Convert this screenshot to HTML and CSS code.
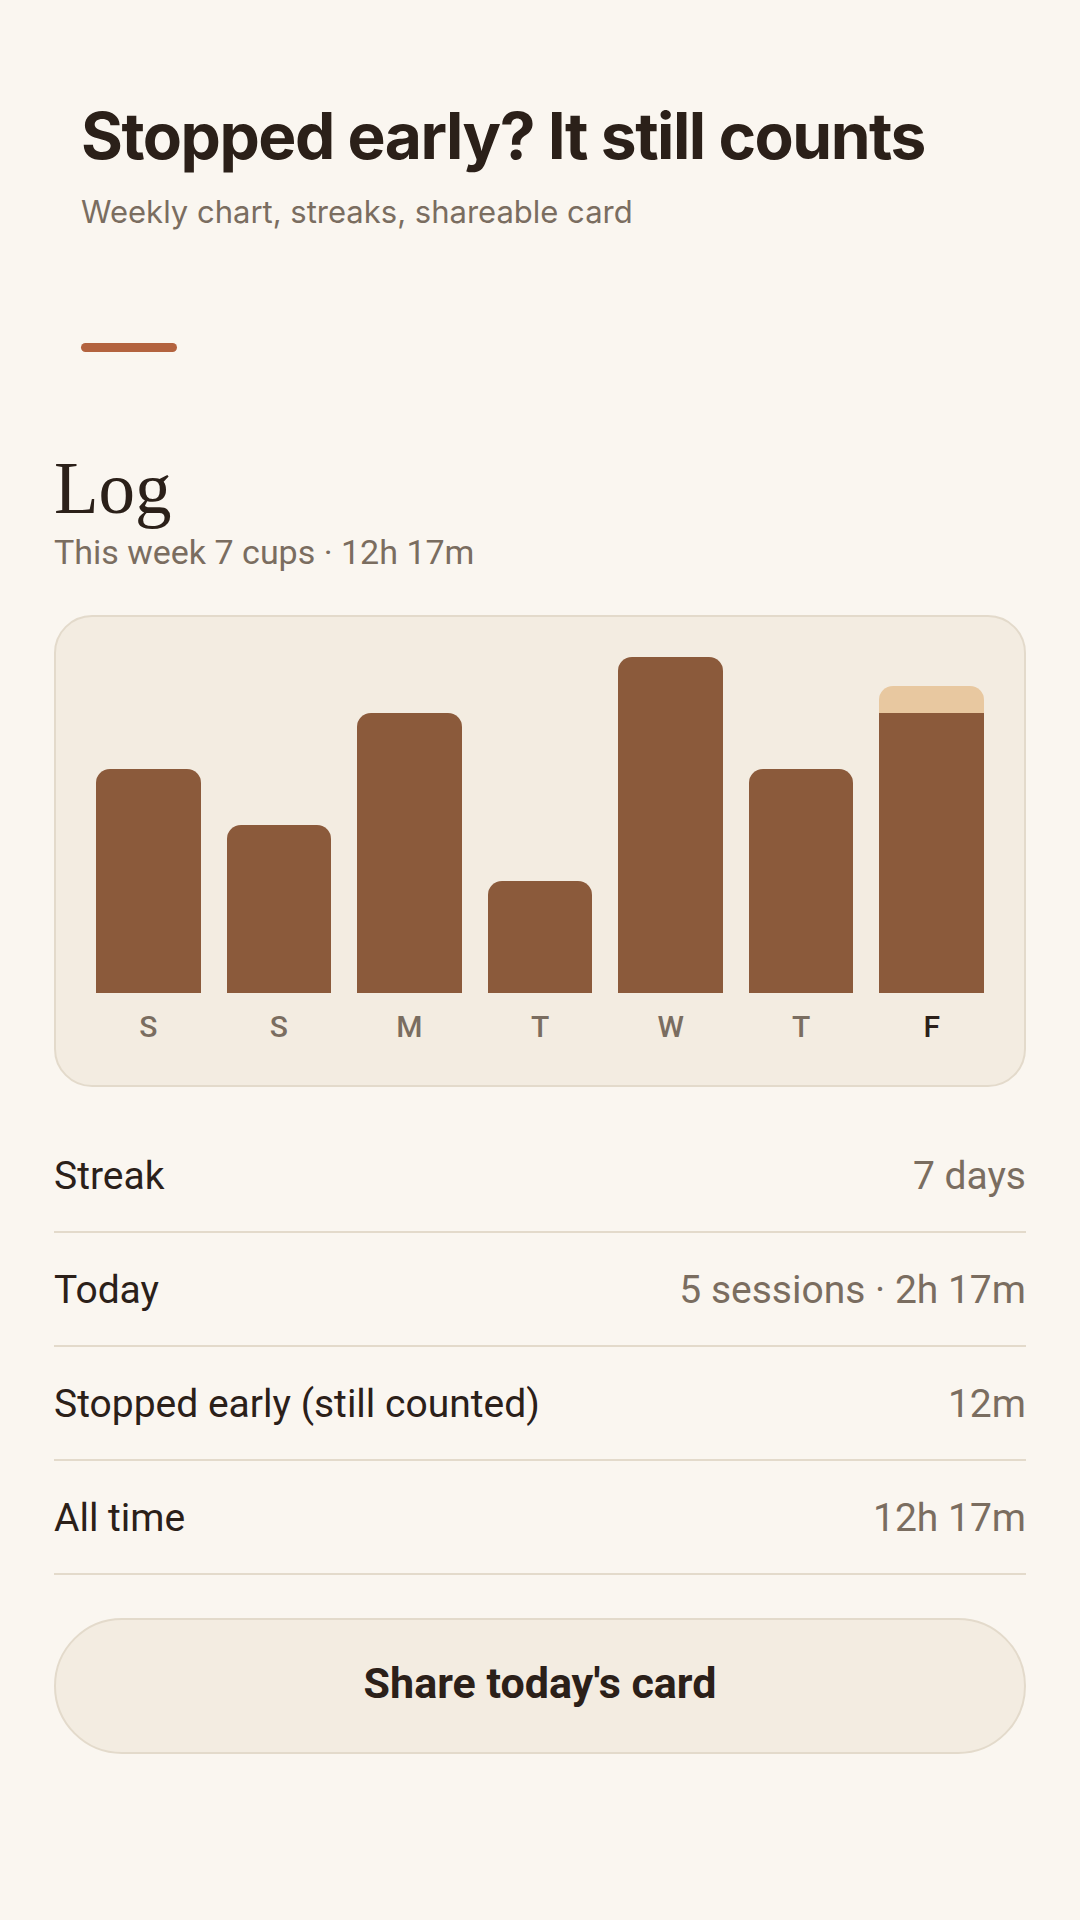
FILE: index.html
```html
<!DOCTYPE html>
<html lang="en">
<head>
<meta charset="utf-8">
<title>Log</title>
<link rel="stylesheet" href="styles.css">
</head>
<body>
<div class="page">
  <header class="hero">
    <h1 class="hero-title">Stopped early? It still counts</h1>
    <p class="hero-sub">Weekly chart, streaks, shareable card</p>
    <div class="accent"></div>
  </header>

  <section class="log">
    <h2 class="log-title">Log</h2>
    <p class="log-sub">This week 7 cups · 12h 17m</p>

    <div class="chart-card">
      <div class="bars">
        <div class="col">
          <div class="track"><div class="bar" style="height:66.667%"></div></div>
          <span class="day">S</span>
        </div>
        <div class="col">
          <div class="track"><div class="bar" style="height:50%"></div></div>
          <span class="day">S</span>
        </div>
        <div class="col">
          <div class="track"><div class="bar" style="height:83.333%"></div></div>
          <span class="day">M</span>
        </div>
        <div class="col">
          <div class="track"><div class="bar" style="height:33.333%"></div></div>
          <span class="day">T</span>
        </div>
        <div class="col">
          <div class="track"><div class="bar" style="height:100%"></div></div>
          <span class="day">W</span>
        </div>
        <div class="col">
          <div class="track"><div class="bar" style="height:66.667%"></div></div>
          <span class="day">T</span>
        </div>
        <div class="col">
          <div class="track">
            <div class="bar bar-split" style="height:91.4%">
              <div class="bar-early" style="height:27px"></div>
              <div class="bar-done"></div>
            </div>
          </div>
          <span class="day day-today">F</span>
        </div>
      </div>
    </div>

    <ul class="stats">
      <li class="stat"><span class="stat-label">Streak</span><span class="stat-value">7 days</span></li>
      <li class="stat"><span class="stat-label">Today</span><span class="stat-value">5 sessions · 2h 17m</span></li>
      <li class="stat"><span class="stat-label">Stopped early (still counted)</span><span class="stat-value">12m</span></li>
      <li class="stat"><span class="stat-label">All time</span><span class="stat-value">12h 17m</span></li>
    </ul>

    <button class="share" type="button">Share today's card</button>
  </section>
</div>
</body>
</html>
```

FILE: styles.css
```css
* {
  box-sizing: border-box;
}

html, body {
  margin: 0;
  padding: 0;
}

body {
  background: #faf6f0;
  color: #2b2019;
  font-family: Roboto, "Noto Sans", sans-serif;
  width: 1080px;
  min-height: 1920px;
}

.page {
  padding: 0 54px;
}

/* Hero */
.hero {
  padding: 98px 0 0 27px;
}

.hero-title {
  margin: 0;
  font-family: Inter, "Liberation Sans", sans-serif;
  font-weight: 700;
  font-size: 64px;
  line-height: 1.2;
  letter-spacing: -0.023em;
  color: #2b2019;
}

.hero-sub {
  margin: 15px 0 0;
  font-family: Inter, "Liberation Sans", sans-serif;
  font-size: 31px;
  line-height: 1.4;
  color: #7a6d60;
}

.accent {
  margin-top: 110px;
  width: 96px;
  height: 9px;
  border-radius: 5px;
  background: #b3633f;
}

/* Log */
.log-title {
  margin: 101px 0 0;
  font-family: "Liberation Serif", "DejaVu Serif", serif;
  font-weight: 400;
  font-size: 73px;
  line-height: 72px;
  color: #2b2019;
}

.log-sub {
  margin: 7px 0 0;
  font-size: 34px;
  line-height: 40px;
  color: #7a6d60;
}

.chart-card {
  margin-top: 43px;
  background: #f3ece1;
  border: 2px solid #e3dacb;
  border-radius: 38px;
  padding: 40px 40px 41px;
}

.bars {
  display: flex;
  gap: 26px;
}

.col {
  flex: 1;
  display: flex;
  flex-direction: column;
  align-items: stretch;
}

.track {
  height: 336px;
  display: flex;
  flex-direction: column;
  justify-content: flex-end;
}

.bar {
  background: #8b5a3b;
  border-radius: 14px 14px 0 0;
}

.bar-split {
  display: flex;
  flex-direction: column;
  background: transparent;
  overflow: hidden;
}

.bar-early {
  background: #e8c8a0;
  flex: none;
}

.bar-done {
  flex: 1;
  background: #8b5a3b;
}

.day {
  margin-top: 17px;
  text-align: center;
  font-size: 30px;
  font-weight: 500;
  line-height: 34px;
  color: #7a6d60;
}

.day-today {
  color: #2b2019;
}

/* Stats */
.stats {
  list-style: none;
  margin: 32px 0 0;
  padding: 0;
}

.stat {
  display: flex;
  justify-content: space-between;
  align-items: center;
  padding: 34px 0 32px;
  border-bottom: 2px solid #e3dacb;
  font-size: 39px;
  line-height: 46px;
}

.stat-label {
  color: #2b2019;
}

.stat-value {
  color: #7a6d60;
}

/* Share button */
.share {
  display: block;
  width: 100%;
  margin-top: 43px;
  height: 136px;
  padding: 0 0 7px;
  border: 2px solid #e3dacb;
  border-radius: 68px;
  background: #f3ece1;
  font-family: Roboto, "Noto Sans", sans-serif;
  font-weight: 700;
  font-size: 43px;
  color: #2b2019;
  cursor: pointer;
}
```
